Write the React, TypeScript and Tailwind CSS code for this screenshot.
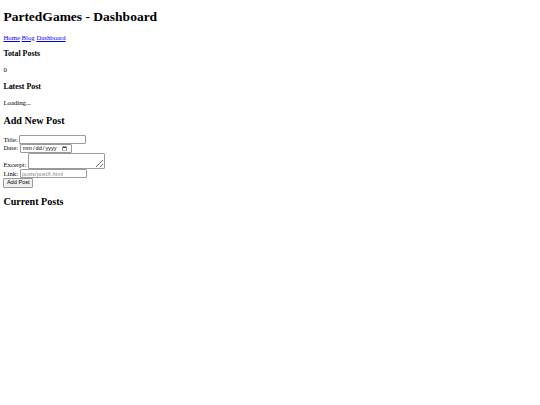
import React from "react"

const navLinks = ["Home", "Blog", "Dashboard"]

const inputCls =
  "h-[9px] border border-[#9a9a9a] rounded-[1px] bg-white px-[1px] align-baseline font-['Liberation_Sans',Arial,sans-serif] text-[5.6px] leading-none text-black"

export default function App() {
  return (
    <div className="min-h-[405px] bg-white px-[3.4px] pt-px font-['Liberation_Serif','Times_New_Roman',serif] text-[6.75px] leading-[1.15] text-black">
      <h1 className="mt-[8px] mb-[9px] text-[13.5px] font-bold leading-[1.15]">
        PartedGames - Dashboard
      </h1>
      <nav>
        {navLinks.map((l, i) => (
          <React.Fragment key={l}>
            {i > 0 && " "}
            <a href="#" className="text-[#0000ee] underline">
              {l}
            </a>
          </React.Fragment>
        ))}
      </nav>

      <h3 className="my-[7.9px] text-[7.9px] font-bold">Total Posts</h3>
      <p className="my-[6.75px]">0</p>

      <h3 className="my-[7.9px] text-[7.9px] font-bold">Latest Post</h3>
      <p className="my-[6.75px]">Loading...</p>

      <h2 className="my-[8.4px] text-[10.1px] font-bold">Add New Post</h2>
      <form onSubmit={(e) => e.preventDefault()}>
        Title: <input type="text" className={`${inputCls} w-[67px]`} />
        <br />
        Date: <input type="date" className={`${inputCls} w-[52px] text-[#111]`} />
        <br />
        Excerpt:{" "}
        <textarea className="h-[16px] w-[77px] resize-y border border-[#9a9a9a] rounded-[1px] bg-white align-bottom text-[5.6px]" />
        <br />
        Link:{" "}
        <input
          type="text"
          placeholder="posts/postX.html"
          className={`${inputCls} w-[67px] placeholder:text-[#8a8a8a]`}
        />
        <br />
        <button
          type="submit"
          className="h-[9.5px] border border-[#9a9a9a] rounded-[1px] bg-[#efefef] px-[2.5px] font-['Liberation_Sans',Arial,sans-serif] text-[5.6px] leading-none text-black"
        >
          Add Post
        </button>
      </form>

      <h2 className="my-[8.4px] text-[10.1px] font-bold">Current Posts</h2>
    </div>
  )
}
